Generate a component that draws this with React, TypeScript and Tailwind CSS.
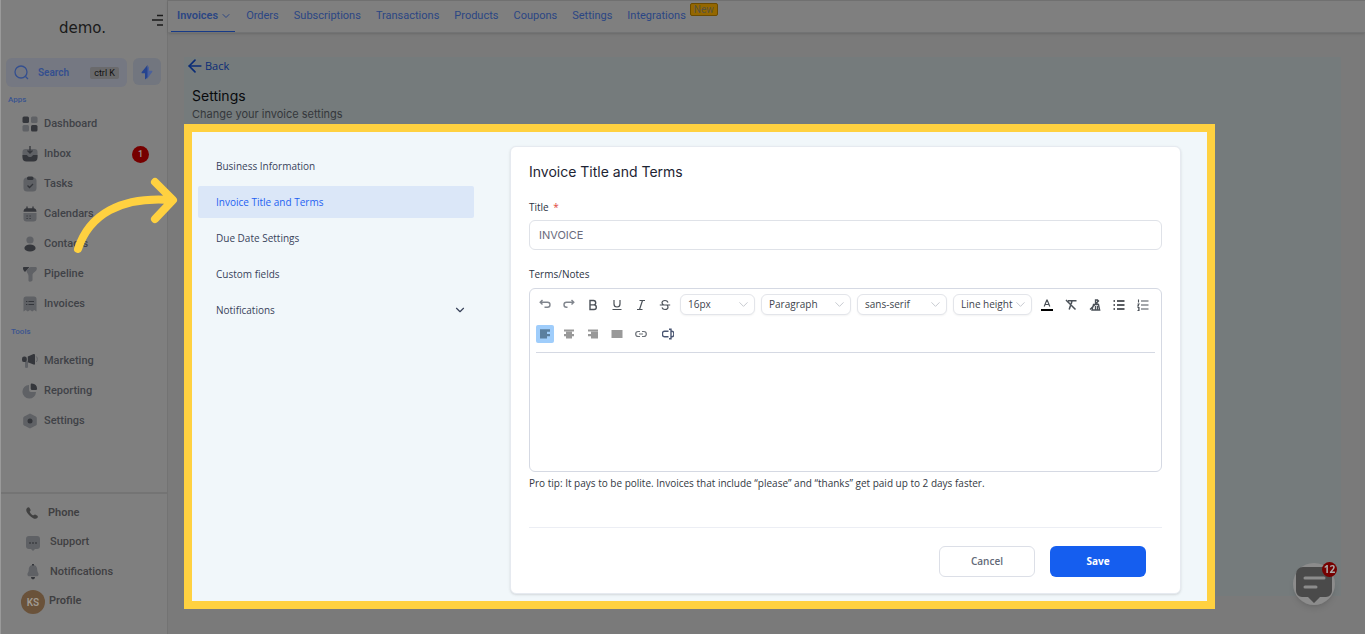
import React from "react";
import { ChevronDown, ArrowLeft } from "lucide-react";

const ink = "#34363b";
const soft = "#5f6165";

type IconProps = { children: React.ReactNode; size?: string };
const Glyph = ({ children, size = "size-4" }: IconProps) => (
  <svg viewBox="0 0 16 16" className={`${size} shrink-0`} fill="none" aria-hidden="true">
    {children}
  </svg>
);

const icons: Record<string, React.ReactNode> = {
  Dashboard: (
    <Glyph>
      <rect x="0.5" y="0.5" width="6.5" height="6.5" rx="1.5" fill={ink} />
      <rect x="9" y="0.5" width="6.5" height="6.5" rx="1.5" fill={soft} />
      <rect x="0.5" y="9" width="6.5" height="6.5" rx="1.5" fill={soft} />
      <rect x="9" y="9" width="6.5" height="6.5" rx="1.5" fill={ink} />
    </Glyph>
  ),
  Inbox: (
    <Glyph>
      <rect x="0.5" y="3" width="15" height="10" rx="3" fill={soft} />
      <path d="M0.5 9h4c.5 0 .8.4 1 .8.8 1.6 4.2 1.6 5 0 .2-.4.5-.8 1-.8h4v2.500a4 4 0 0 1-4 4h-7a4 4 0 0 1-4-4z" fill={ink} />
      <path d="M8 0v6.500M5.500 4.500 8 7l2.500-2.500" stroke={ink} strokeWidth="1.300" />
    </Glyph>
  ),
  Tasks: (
    <Glyph>
      <rect x="1.500" y="1.500" width="13" height="14" rx="3.500" fill={soft} />
      <rect x="5" y="0.500" width="6.500" height="3.500" rx="1.500" fill={ink} />
      <path d="m5.500 9.500 2 2 3.500-3.500" stroke={ink} strokeWidth="1.300" />
    </Glyph>
  ),
  Calendars: (
    <Glyph>
      <path d="M1.500 7h13v5.500a3 3 0 0 1-3 3h-7a3 3 0 0 1-3-3z" fill={soft} />
      <path d="M1.500 5.800c0-2 1-3.600 3-3.600h7c2 0 3 1.600 3 3.600z" fill={ink} />
      <path d="M5 .5v3M11 .5v3" stroke={ink} strokeWidth="1.300" />
      <path d="M4.500 10h1.200M7.500 10h1.200M4.500 12.500h1.200M7.500 12.500h1.200" stroke={ink} strokeWidth="1.200" />
    </Glyph>
  ),
  Contacts: (
    <Glyph>
      <circle cx="8" cy="4" r="3.600" fill={soft} />
      <ellipse cx="8" cy="12" rx="5.600" ry="3.600" fill={ink} />
    </Glyph>
  ),
  Pipeline: (
    <Glyph>
      <path d="M8.500 1h5c1.200 0 1.500 1 1.200 2.200-.6 2.600-4.200 3.200-4.200 6V14c0 1.500-3.500 2.500-4 .8V10C6.500 6.500 3 6 5.500 3.500z" fill={soft} />
      <path d="M2 1h5.500L3 6C1.500 4.500 1 3.500 1 2.200 1 1.400 1.400 1 2 1z" fill={ink} />
    </Glyph>
  ),
  Invoices: (
    <Glyph>
      <path d="M4 .5h8a2.500 2.500 0 0 1 2.500 2.500v12.500l-2.200-1.500-2.100 1.500L8 14l-2.200 1.500L3.700 14l-2.200 1.500V3A2.500 2.500 0 0 1 4 .5z" fill={soft} />
      <path d="M4 5.500h1.300M6.500 5.500H12M4 8.500h1.300M6.500 8.500H12" stroke={ink} strokeWidth="1.200" />
    </Glyph>
  ),
  Marketing: (
    <Glyph>
      <path d="M3 8.500h3v5.500c0 1.200-3 1.200-3 0z" fill={soft} />
      <rect x="0" y="3.500" width="4.800" height="5.600" rx="2.200" fill={ink} />
      <path d="M5.800 3.500 11.500 1c.8-.3 1.500 0 1.500.8v9c0 .8-.7 1.100-1.500.8L5.800 9.200z" fill={ink} />
      <path d="M14.300 3.500c1.400 1.500 1.400 4 0 5.500" stroke={soft} strokeWidth="1" />
    </Glyph>
  ),
  Reporting: (
    <Glyph>
      <path d="M7 2a6.800 6.800 0 1 0 7 7H9a2 2 0 0 1-2-2z" fill={soft} />
      <path d="M8.700 1.500c0-.8.500-1.100 1.200-1a5.600 5.600 0 0 1 5.200 5.300c0 .7-.3 1.200-1 1.200h-3.900c-.9 0-1.500-.6-1.500-1.500z" fill={ink} />
    </Glyph>
  ),
  Settings: (
    <Glyph>
      <path d="m8 .5 5.800 3c.7.400 1 .9 1 1.600v5.800c0 .7-.3 1.200-1 1.600L8 15.500l-5.800-3c-.7-.400-1-.9-1-1.600V5.100c0-.7.300-1.200 1-1.600z" fill={soft} />
      <circle cx="8" cy="8" r="2.500" fill={ink} />
    </Glyph>
  ),
  Phone: (
    <Glyph size="size-3">
      <path d="M1.200 1.500C2.500 0 4 0 5 1.500l1 2c.5 1-.2 1.800-.9 2.500-.4.500 1 2.400 1.800 3.200.8.800 2.700 2.200 3.300 1.800.8-.6 1.500-1.300 2.500-.8l2 1.100c1.500.8 1.400 2.300.2 3.500C13 16.500 9 15.500 5 11.500 0 6.500-.5 3.500 1.200 1.500z" fill="#414141" />
    </Glyph>
  ),
  Support: (
    <Glyph>
      <path d="M4 1h8a3 3 0 0 1 3 3v7a3 3 0 0 1-3 3h-2l-2 2-2-2H4a3 3 0 0 1-3-3V4a3 3 0 0 1 3-3z" fill={soft} />
      <path d="M4.200 8h1.600M7.200 8h1.600M10.200 8h1.600" stroke={ink} strokeWidth="1.500" />
    </Glyph>
  ),
  Notifications: (
    <Glyph>
      <path d="M8 1c3 0 4.200 2.300 4.200 4.800 0 2.700 1.800 3.600 1.300 5.200-.2.900-1 1.200-2 1.200h-7c-1 0-1.800-.3-2-1.200-.5-1.600 1.300-2.500 1.300-5.200C3.800 3.300 5 1 8 1z" fill={soft} />
      <path d="M6 13h4c0 1.500-.9 2.300-2 2.300S6 14.500 6 13z" fill={ink} />
      <path d="M7 0h2v1.500H7z" fill={ink} />
    </Glyph>
  ),
};

const SideLink = ({ name, badge }: { name: string; badge?: string }) => (
  <a href="#" className="flex h-[30px] items-center gap-1.5 pr-[18px] pl-[21px] text-[11px] font-medium text-[#404247]">
    {icons[name]}
    <span className="flex-1">{name}</span>
    {badge && (
      <span className="mt-px flex size-[17px] items-center justify-center rounded-full bg-[#760000] text-[9px] text-[#9a9a9a]">
        {badge}
      </span>
    )}
  </a>
);

const Sidebar = () => (
  <aside className="flex w-[168px] shrink-0 flex-col border-r border-l border-r-[#737373] border-l-[#9a9a9a] bg-[#7f7f7f] font-['Roboto',sans-serif]">
    <div className="flex h-[58px] items-start justify-between pr-[3px] pl-[58px]">
      <span className="pt-[19px] font-['DejaVu_Sans',sans-serif] text-[15px] leading-[18px] text-[#1a1a1a]">demo.</span>
      <button aria-label="Toggle menu" className="mt-[14px]">
        <svg width="12" height="12" viewBox="0 0 12 12" stroke="#1b1b1b" strokeWidth="1.500">
          <path d="M5 1.500h6M0 6h11M5 11h6" />
        </svg>
      </button>
    </div>
    <div className="flex items-start gap-1.5 pr-1.5 pl-[5px]">
      <button className="flex h-[29px] flex-1 items-center rounded-md bg-[#757882] pr-2 pl-2 text-[10px] font-semibold text-[#344f8f]">
        <svg width="15" height="15" viewBox="0 0 15 15" fill="none" stroke="#344f8f" strokeWidth="1.300">
          <circle cx="7" cy="7" r="6" />
          <path d="m11.500 11.500 2.500 2.500" />
        </svg>
        <span className="ml-[9px] flex-1 text-left">Search</span>
        <kbd className="rounded-xs bg-[#6a6a6c] px-1 font-['Roboto',sans-serif] text-[9px] leading-[12px] font-normal text-[#111]">ctrl K</kbd>
      </button>
      <button aria-label="Quick actions" className="flex h-[27px] w-7 items-center justify-center rounded-md bg-[#72767f]">
        <svg width="12" height="16" viewBox="0 0 12 16">
          <path d="M6 4.500V15l5.200-7c.5-.700.2-1.300-.6-1.300H8V2z" fill="#4c619b" />
          <path d="M6.500 1v12L5 15c-.6.500-1 .2-1-.5V9.300H1.400c-.8 0-1.100-.6-.6-1.300z" fill="#26448f" />
        </svg>
      </button>
    </div>
    <h2 className="flex h-[22px] items-center pt-[3px] pl-[7px] text-[8px] font-medium text-[#3a5490]">Apps</h2>
    <nav>
      <SideLink name="Dashboard" />
      <SideLink name="Inbox" badge="1" />
      <SideLink name="Tasks" />
      <SideLink name="Calendars" />
      <SideLink name="Contacts" />
      <SideLink name="Pipeline" />
      <SideLink name="Invoices" />
    </nav>
    <h2 className="flex h-[27px] items-center pb-[2px] pl-[10px] text-[8px] font-medium text-[#3a5490]">Tools</h2>
    <nav>
      <SideLink name="Marketing" />
      <SideLink name="Reporting" />
      <SideLink name="Settings" />
    </nav>
    <div className="mt-auto border-t-2 border-[#747474] pt-1 pb-5 pl-6 text-[11px] font-medium text-[#3f4042]">
      <a href="#" className="flex h-[30px] items-center gap-[10px] pl-px font-semibold">{icons.Phone}Phone</a>
      <a href="#" className="flex h-[29px] items-center gap-[9px]">{icons.Support}Support</a>
      <a href="#" className="flex h-[30px] items-center gap-[9px]">{icons.Notifications}Notifications</a>
      <a href="#" className="-ml-1 flex h-[28px] items-center gap-1 font-semibold">
        <span className="mt-[2px] flex size-6 items-center justify-center rounded-full bg-[#6a523a] text-[10px] text-[#a09a92]">KS</span>
        Profile
      </a>
    </div>
  </aside>
);

const TopNav = () => (
  <header className="relative flex h-[33px] items-stretch gap-[15px] border-t border-b border-t-[#707070] border-b-[#727374] bg-[#7f7f7f] pl-[3px] font-['Roboto',sans-serif] text-[11px] text-[#2b4684] shadow-sm">
    <a href="#" className="-mr-1 flex items-center gap-0.5 border-b border-[#173a87] pr-[3px] pl-1.5 font-semibold">
      Invoices
      <ChevronDown className="size-3" strokeWidth={2} />
    </a>
    {["Orders", "Subscriptions", "Transactions", "Products", "Coupons", "Settings"].map((item) => (
      <a key={item} href="#" className="flex items-center">{item}</a>
    ))}
    <a href="#" className="flex items-center gap-1">
      Integrations
      <span className="mt-[2px] flex h-[13px] items-center self-start rounded-xs border border-[#6c4b00] bg-[#946700] px-[3px] text-[10px] text-[#57533f]">New</span>
    </a>
  </header>
);

const SettingsMenu = () => (
  <nav className="flex w-[276px] flex-col gap-1 text-[10px] text-[#39435a]">
    <a href="#" className="flex h-8 items-center pl-[18px]">Business Information</a>
    <a href="#" aria-current="page" className="flex h-8 items-center rounded-xs bg-[#dbe7f8] pl-[18px] text-[#1f62f2]">Invoice Title and Terms</a>
    <a href="#" className="flex h-8 items-center pl-[18px]">Due Date Settings</a>
    <a href="#" className="flex h-8 items-center pl-[18px]">Custom fields</a>
    <button className="flex h-8 items-center justify-between pr-[7px] pl-[18px]">
      Notifications
      <ChevronDown className="size-[14px]" strokeWidth={2} />
    </button>
  </nav>
);

const Tool = ({ label, active, children }: { label: string; active?: boolean; children: React.ReactNode }) => (
  <button
    aria-label={label}
    className={`flex size-[18px] shrink-0 items-center justify-center rounded-xs ${active ? "bg-[#9fcdfb] text-[#5b7f9f]" : "text-[#4b5158]"}`}
  >
    <svg width="12" height="12" viewBox="0 0 12 12" fill="none" stroke="currentColor" strokeWidth="1.200">
      {children}
    </svg>
  </button>
);

const Picker = ({ label, value, width }: { label: string; value: string; width: string }) => (
  <span className={`relative flex h-[21px] shrink-0 items-center ${width}`}>
    <select aria-label={label} className="h-full w-full appearance-none rounded-md border border-[#e3e5ea] bg-white pl-[7px] text-[10px] text-[#40444c] shadow-xs">
      <option>{value}</option>
    </select>
    <ChevronDown className="pointer-events-none absolute right-1 size-[15px] text-[#c3c6cd]" strokeWidth={1.500} />
  </span>
);

const Editor = () => (
  <div className="rounded-md border border-[#d5d9e3] px-1.5 pt-[5px]">
    <div className="flex flex-wrap items-center gap-x-1.5 gap-y-[10px] border-b border-[#d5d9e3] pb-[9px]">
      <Tool label="Undo"><path d="M3.500 1 1.200 3.300l2.300 2.300M1.500 3.300h7a2.400 2.400 0 0 1 0 5H5.500" stroke="#80858d" strokeWidth="1.400" /></Tool>
      <Tool label="Redo"><path d="m8.500 1 2.300 2.300-2.300 2.300M10.500 3.300h-7a2.400 2.400 0 0 0 0 5h1" stroke="#80858d" strokeWidth="1.400" /></Tool>
      <Tool label="Bold"><path d="M3 1.500h3.500a2.200 2.200 0 0 1 0 4.400H3zM3 5.900h4a2.300 2.300 0 0 1 0 4.600H3z" strokeWidth="1.400" /></Tool>
      <Tool label="Underline"><path d="M3 1v4a3 3 0 0 0 6 0V1M1.500 10.500h9" /></Tool>
      <Tool label="Italic"><path d="M4.500 1.500H10M2 10.500h5.500M7.500 1.500l-3 9" /></Tool>
      <Tool label="Strikethrough"><path d="M9 3.500C8.500 2 7.500 1.500 6 1.500 4 1.500 3 2.500 3 3.700c0 1 .7 1.600 1.500 2M3 8.500c.5 1.500 1.500 2 3 2 2 0 3-1 3-2.200 0-1-.4-1.600-1-2M.8 6h10.400" /></Tool>
      <Picker label="Font size" value="16px" width="w-[75px]" />
      <Picker label="Block style" value="Paragraph" width="w-[90px]" />
      <Picker label="Font family" value="sans-serif" width="w-[90px]" />
      <Picker label="Line height" value="Line height" width="w-[79px]" />
      <Tool label="Text color"><path d="m3.200 7.500 2.600-6.500h.4l2.600 6.500M4 5.500h4" /><path d="M0 11h12" stroke="#000" strokeWidth="2" /></Tool>
      <Tool label="Clear formatting"><path d="M3 1.700h8.500M7 1.700 6.200 5M1 1l9.500 9.500M5.500 6.500l-1.300 4" strokeWidth="1.500" /></Tool>
      <Tool label="Highlight"><path d="M6.500 4.500V1h2v3.500M4.500 5.500h5l1.200 5.500H3zM1 10.500l9-9M6.500 7v4M8.500 7v4" strokeWidth="1.300" /></Tool>
      <Tool label="Bulleted list"><path d="M4 2h7.500M4 6h7.500M4 10h7.500M.5 2H2M.5 6H2M.5 10H2" stroke="#25292f" strokeWidth="1.400" /></Tool>
      <Tool label="Numbered list"><path d="M4 2h7.500M4 6h7.500M4 10h7.500M1.500.5v3M.5 5h1.500L.8 7H2M.5 8.500H2v3H.5M1 10h1" strokeWidth="1.100" /></Tool>
      <span className="flex basis-full gap-1.5">
        <Tool label="Align left" active><path d="M1 2.500h10M1 4.800h7M1 7.100h10M1 9.400h7" strokeWidth="2.400" /></Tool>
        <Tool label="Align center"><path d="M1 2.500h10M3 4.800h6M1 7.100h10M3 9.400h6" stroke="#999" strokeWidth="2.200" /></Tool>
        <Tool label="Align right"><path d="M1 2.500h10M4 4.800h7M1 7.100h10M4 9.400h7" stroke="#999" strokeWidth="2.200" /></Tool>
        <Tool label="Justify"><path d="M.5 6h11" stroke="#999" strokeWidth="8" /></Tool>
        <Tool label="Insert link"><path d="M5 3.500H3.200a2.500 2.500 0 0 0 0 5H5M7 3.500h1.800a2.500 2.500 0 0 1 0 5H7M4 6h4" stroke="#6b7077" /></Tool>
        <span className="ml-[3px]">
          <Tool label="Insert custom value"><path d="M6.500 3.200h-4a2 2 0 0 0-2 2v1.600a2 2 0 0 0 2 2h4M7 1.300h2v9.400H7M9 3.200h.8a2 2 0 0 1 2 2v1.600a2 2 0 0 1-2 2H9" stroke="#4a5672" strokeWidth="1.400" /></Tool>
        </span>
      </span>
    </div>
    <textarea aria-labelledby="terms-label" className="block h-[118px] w-full resize-none bg-transparent outline-none" />
  </div>
);

const TitleCard = () => (
  <section className="flex-1 rounded-md border border-[#e6eaf0] bg-white px-[18px] pt-[15px] pb-4 shadow-sm">
    <h2 className="font-['Inter',sans-serif] text-[14px] leading-5 text-[#1d2433]">Invoice Title and Terms</h2>
    <label htmlFor="invoice-title" className="mt-[17px] block text-[10px] leading-4 text-[#2c3444]">
      Title <span className="ml-0.5 text-[#e0453c]">*</span>
    </label>
    <input
      id="invoice-title"
      defaultValue="INVOICE"
      className="mt-[5px] h-[30px] w-full rounded-md border border-[#dfe2e8] px-[9px] font-['Inter',sans-serif] text-[11px] text-[#6a6b7c] outline-none"
    />
    <label id="terms-label" className="mt-4 mb-1.5 block text-[10px] leading-4 text-[#2c3444]">Terms/Notes</label>
    <Editor />
    <p className="mt-[3px] text-[10px] leading-4 text-[#33383f]">
      Pro tip: It pays to be polite. Invoices that include “please” and “thanks” get paid up to 2 days faster.
    </p>
    <div className="mt-9 flex justify-end gap-[15px] border-t border-[#eceef4] pt-[18px] pr-4">
      <button className="h-[31px] w-24 rounded-md border border-[#dcdfe7] bg-white text-[10px] font-semibold text-[#636977]">Cancel</button>
      <button className="h-[31px] w-24 rounded-md bg-[#155eef] text-[10px] font-bold text-white">Save</button>
    </div>
  </section>
);

const GuideArrow = () => (
  <svg
    className="pointer-events-none absolute top-[174px] left-[70px]"
    width="112"
    height="82"
    viewBox="70 174 112 82"
    fill="none"
    stroke="#ffd140"
    strokeWidth="8"
    strokeLinecap="round"
    strokeLinejoin="round"
    aria-hidden="true"
  >
    <path d="M78 249C89 215 120 196 172 200M155 182l18 18-18 19" />
  </svg>
);

const ChatButton = () => (
  <button aria-label="Open chat" className="fixed right-[30px] bottom-[29px] flex size-[42px] items-center justify-center rounded-full bg-[#8c8c8c] shadow-md">
    <svg width="38" height="38" viewBox="0 0 38 38">
      <path d="M8 2h22a7 7 0 0 1 7 7v17a6 6 0 0 1-6 6h-6l-6 6-6-6H7a6 6 0 0 1-6-6V9a7 7 0 0 1 7-7z" fill="#4a4a4a" />
      <path d="M10 13h19M10 22h11" stroke="#8c8c8c" strokeWidth="3" strokeLinecap="round" />
    </svg>
    <span className="absolute -top-px -right-0.5 flex size-[15px] items-center justify-center rounded-full bg-[#760000] font-['Open_Sans',sans-serif] text-[10px] font-bold text-[#aaa]">12</span>
  </button>
);

export default function App() {
  return (
    <div className="relative flex min-h-screen bg-[#7a7a7a] font-['Open_Sans',sans-serif]">
      <Sidebar />
      <div className="flex min-w-0 flex-1 flex-col">
        <TopNav />
        <main className="flex-1 bg-[linear-gradient(#757b7c,#757b7c)] bg-[length:calc(100%-40px)_calc(100%-63px)] bg-[position:16px_24px] bg-no-repeat pr-[150px] pb-[26px] pl-4">
          <a href="#" className="mt-[25px] ml-px flex h-4 w-fit items-center text-[11px] leading-4 text-[#0a2c77]">
            <ArrowLeft className="size-5" strokeWidth={2} />
            Back
          </a>
          <h1 className="mt-3 ml-2 font-['Inter',sans-serif] text-[14px] leading-5 text-[#080a0d]">Settings</h1>
          <p className="ml-2 font-['Inter',sans-serif] text-[11px] leading-4 text-[#34373b]">Change your invoice settings</p>
          <div className="mt-0.5 flex gap-9 border-8 border-[#ffd140] bg-[#f1f7fa] pt-[14px] pr-[26px] pb-[7px] pl-1.5">
            <div className="pt-1">
              <SettingsMenu />
            </div>
            <TitleCard />
          </div>
        </main>
      </div>
      <GuideArrow />
      <ChatButton />
    </div>
  );
}
